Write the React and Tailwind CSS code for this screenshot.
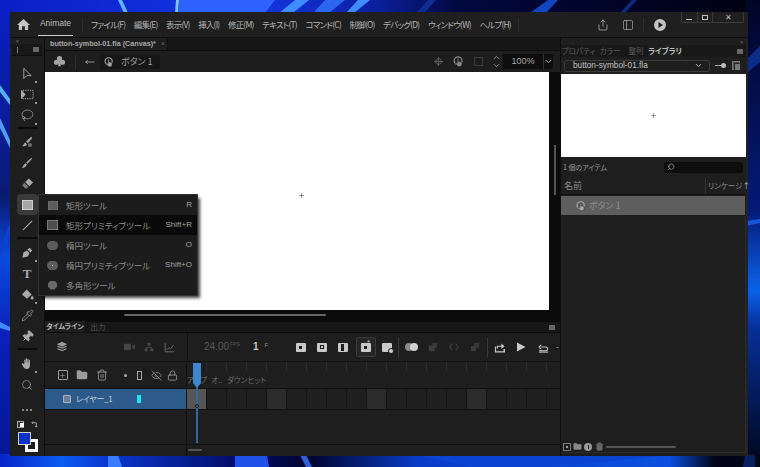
import React from "react";
import { Share, PanelLeft, ChevronDown, ChevronUp, Search, Lasso, Pipette, Pin, MoveLeft, FolderClosed, Trash2, Lock, EyeOff, Plus } from "lucide-react";

const FONT = "font-['Noto_Sans_CJK_JP','Noto_Sans',sans-serif] [font-feature-settings:'palt']";
const LATIN = "font-['Liberation_Sans',sans-serif]";

const menus = ["ファイル(F)", "編集(E)", "表示(V)", "挿入(I)", "修正(M)", "テキスト(T)", "コマンド(C)", "制御(O)", "デバッグ(D)", "ウィンドウ(W)", "ヘルプ(H)"];

// Hand inside a ring, the mark used for button symbols
function ButtonSymbol({ className = "" }) {
  return (
    <svg viewBox="0 0 14 14" className={className}>
      <circle cx="6.500" cy="6" r="5" fill="none" stroke="currentColor" strokeWidth="1.600" />
      <path d="M5.500 3h1.800v4l4 .7V11l-1 2.500H6.500L3 9.500l1-1 1.500 1z" fill="currentColor" stroke="#1d1d1d" strokeWidth=".6" />
    </svg>
  );
}

function Tool({ children, active, corner }) {
  return (
    <div className={`relative h-[21px] w-[21px] flex items-center justify-center text-[#a9a9a9] rounded-sm ${active ? "bg-[#3a3a3a]" : ""}`}>
      {children}
      {corner && <span className="absolute right-[1px] bottom-[1px] w-[2px] h-[2px] bg-[#999]" />}
    </div>
  );
}

function ToolBar() {
  return (
    <div className="w-[35px] shrink-0 flex flex-col items-center border-r border-[#0e0e0e] bg-[#1e1e1e] relative">
      <div className="w-full h-[6px] flex items-center pl-[6px] text-[6px] leading-none text-[#888]">«</div>
      <div className="w-[30px] h-[12px] bg-[#171717] flex items-center justify-between pl-[5px] pr-[3px] border-b border-[#0d0d0d]">
        <span className="w-[1px] h-[6px] bg-[#6d7f8c]" />
        <span className="w-[6px] h-[5px] bg-[#666]" />
      </div>
      <div className="h-[7px]" />
      <Tool corner>
        <svg viewBox="0 0 14 14" className="w-[13px] h-[13px]" fill="none" stroke="currentColor" strokeWidth="1"><path d="M3 1.500v11l3-3.200h5z" /></svg>
      </Tool>
      <Tool corner>
        <svg viewBox="0 0 16 14" className="w-[15px] h-[13px]" fill="none" stroke="currentColor" strokeWidth="1"><path d="M3 2.500h11v9H3z" strokeDasharray="1.500 1" /><path d="M1 2l5 5-5 5z" fill="currentColor" stroke="none" /></svg>
      </Tool>
      <Tool corner><Lasso size={13} strokeWidth={1.3} /></Tool>
      <div className="w-[20px] h-[2px] bg-[#0b0b0b] mt-[1px] mb-[2px]" />
      <Tool>
        <svg viewBox="0 0 14 14" className="w-[12px] h-[12px]" fill="currentColor"><path d="M12 1L6 6.500l2 2L13 2.500z" /><path d="M5 7.500l2 2c-1 2-3 2.500-6 2.500 2-1 2-3.500 4-4.500z" /><circle cx="10.500" cy="10.500" r="2.300" fillOpacity=".6" /></svg>
      </Tool>
      <Tool>
        <svg viewBox="0 0 14 14" className="w-[12px] h-[12px]" fill="currentColor"><path d="M12.500 1L6 6.500 7.500 8 13 2z" /><path d="M5.300 7.300l1.500 1.500C6 11.500 4 12.500 1 13c1.500-1.500 2-4.500 4.300-5.700z" /></svg>
      </Tool>
      <Tool>
        <svg viewBox="0 0 14 14" className="w-[13px] h-[13px]" fill="currentColor"><path d="M8.500 1.500L13 6l-4 4-4.500-4.500z" /><path d="M3.800 6.300l4.200 4.200-1.800 1.800H4.800L1.500 9.200v-.6z" fillOpacity=".65" /></svg>
      </Tool>
      <Tool active>
        <span className="w-[11px] h-[10px] bg-[#a8a8a8] border border-[#cfcfcf]" />
      </Tool>
      <Tool>
        <svg viewBox="0 0 14 14" className="w-[13px] h-[13px]" stroke="currentColor" strokeWidth="1.100"><path d="M2 12L12 2" /></svg>
      </Tool>
      <div className="w-[20px] h-[2px] bg-[#0b0b0b] mt-[1px] mb-[3px]" />
      <Tool corner>
        <svg viewBox="0 0 14 14" className="w-[12px] h-[12px]" fill="currentColor"><path d="M1.500 12.500L3 6l4-2 3 3-2 4z" /><path d="M7.500 3L10 .8l3.200 3.200L11 6.500z" /></svg>
      </Tool>
      <Tool>
        <span className="text-[13px] leading-none font-bold font-['Liberation_Serif',serif] text-[#a9a9a9]">T</span>
      </Tool>
      <Tool corner>
        <svg viewBox="0 0 14 14" className="w-[13px] h-[13px]" fill="currentColor"><path d="M6 1.500l5.500 5.500-5 4.500L1 7z" /><path d="M12 8c1 1.500 1.500 2.300 1.500 3a1.500 1.500 0 0 1-3 0c0-.7.500-1.500 1.500-3z" /></svg>
      </Tool>
      <Tool><Pipette size={13} strokeWidth={1.3} /></Tool>
      <Tool><Pin size={13} strokeWidth={1.6} fill="currentColor" className="rotate-45" /></Tool>
      <div className="w-[20px] h-[2px] bg-[#0b0b0b] mt-[1px] mb-[3px]" />
      <Tool corner>
        <svg viewBox="0 0 14 14" className="w-[13px] h-[13px]" fill="currentColor"><path d="M3.500 7.500V3.300c0-.8 1.200-.8 1.200 0V6h.4V2c0-.9 1.300-.9 1.300 0v4h.4V2.500c0-.9 1.300-.9 1.300 0V6h.4V3.500c0-.8 1.200-.8 1.200 0V9c0 2.500-1.500 4-3.500 4-2.300 0-3-1.200-4.300-3.300L1 7.700c-.4-.8.500-1.400 1.100-.8z" /></svg>
      </Tool>
      <Tool><Search size={12} strokeWidth={1.3} /></Tool>
      <div className="h-[4px]" />
      <Tool>
        <span className="flex gap-[2px]"><span className="w-[2px] h-[2px] bg-[#aaa] rounded-full" /><span className="w-[2px] h-[2px] bg-[#aaa] rounded-full" /><span className="w-[2px] h-[2px] bg-[#aaa] rounded-full" /></span>
      </Tool>
      <div className="w-[21px] flex justify-between items-center h-[10px] mt-[-1px]">
        <span className="relative w-[7px] h-[7px] border border-[#aaa] bg-[#333]"><span className="absolute left-[2px] top-[1px] w-[4px] h-[4px] bg-white" /></span>
        <svg viewBox="0 0 8 8" className="w-[7px] h-[7px]" fill="none" stroke="#aaa" strokeWidth="1"><path d="M1 2h5v5M4.500 5.500L6 7l1.500-1.500M2.500.5L1 2l1.500 1.500" /></svg>
      </div>
      <div className="relative w-[21px] h-[21px] mt-[2px]">
        <span className="absolute right-0 bottom-0 w-[13px] h-[13px] border-[3px] border-white bg-[#1e1e1e]" />
        <span className="absolute left-[1px] top-[1px] w-[13px] h-[13px] bg-[#0b33c9] border border-[#cfcfcf]" />
      </div>
    </div>
  );
}

function EditBar() {
  return (
    <div className="h-[21px] bg-[#1d1d1d] flex items-center">
      <svg viewBox="0 0 14 14" className="w-[13px] h-[13px] ml-[8px] text-[#a5a5a5]" fill="currentColor"><circle cx="7" cy="4" r="2.800" /><circle cx="3.800" cy="7.800" r="2.800" /><circle cx="10.200" cy="7.800" r="2.800" /><path d="M6.300 7h1.400l.8 5H5.500z" /></svg>
      <span className="w-[1px] h-[14px] bg-[#2e2e2e] ml-[9px]" />
      <MoveLeft size={10} className="ml-[9px] text-[#a8a8a8]" strokeWidth={2} />
      <div className="ml-[5px] w-[60px] h-[14px] bg-[#161616] flex items-center pl-[4px] text-[#a0a0a0]">
        <ButtonSymbol className="w-[10px] h-[10px] shrink-0" />
        <span className="ml-[7px] text-[9px] leading-none whitespace-nowrap">ボタン 1</span>
      </div>
      <div className="ml-auto flex items-center text-[#6a6a6a] mr-[7px]">
        <svg viewBox="0 0 12 12" className="w-[9px] h-[9px] mr-[10px]" fill="none" stroke="currentColor" strokeWidth="1"><circle cx="6" cy="6" r="3.800" /><path d="M6 0v12M0 6h12" /></svg>
        <ButtonSymbol className="w-[11px] h-[11px] mr-[10px] text-[#8a8a8a]" />
        <span className="w-[9px] h-[9px] border border-[#3a3a3a] mr-[9px]" />
        <div className="flex flex-col text-[#a0a0a0] mr-[2px]">
          <ChevronUp size={9} strokeWidth={2} className="-mb-[1px]" />
          <ChevronDown size={9} strokeWidth={2} />
        </div>
        <div className={`w-[40px] h-[15px] bg-[#0e0e0e] text-[9px] leading-[15px] text-center text-[#a8a8a8] ${LATIN}`}>100%</div>
        <div className="w-[10px] h-[15px] bg-[#0e0e0e] border-l border-[#333] rounded-r-[2px] flex items-center justify-center text-[#bbb]">
          <ChevronDown size={9} strokeWidth={2.5} />
        </div>
      </div>
    </div>
  );
}

function SquareIcon({ dim, variant = "dot" }) {
  return (
    <span className={`relative w-[10px] h-[9px] bg-[#c8c8c8] rounded-[1px] flex items-center justify-center ${dim ? "opacity-30" : ""}`}>
      {variant === "dot" && <span className="w-[3px] h-[3px] bg-[#1d1d1d]" />}
      {variant === "ring" && <span className="w-[4px] h-[4px] border border-[#1d1d1d]" />}
      {variant === "half" && <span className="w-[3px] h-[7px] bg-[#1d1d1d]" />}
    </span>
  );
}

function Slot({ w = 21, children, className = "" }) {
  return <div className={`flex items-center justify-center shrink-0 ${className}`} style={{ width: w }}>{children}</div>;
}

function TimelineToolbar() {
  return (
    <div className="h-[29px] flex items-center border-b border-[#121212] bg-[#1e1e1e]">
      <Slot w={34}>
        <svg viewBox="0 0 14 14" className="w-[12px] h-[12px] text-[#9a9a9a]" fill="currentColor"><path d="M7 1l6 2.800-6 2.800-6-2.800z" /><path d="M1 6.300l1.500-.7L7 7.700l4.500-2.100 1.500.7-6 2.800z" /><path d="M1 9.200l1.500-.7L7 10.600l4.500-2.100 1.500.7L7 12z" /></svg>
      </Slot>
      <Slot w={40} />
      <Slot w={20}>
        <svg viewBox="0 0 14 10" className="w-[11px] h-[8px] text-[#444]" fill="currentColor"><rect y="1" width="9" height="8" rx="1" /><path d="M10 4l4-2.500v7L10 6z" /></svg>
      </Slot>
      <Slot w={20}>
        <svg viewBox="0 0 14 14" className="w-[10px] h-[10px] text-[#4a4a4a]" fill="currentColor"><rect x="5" y="1" width="4" height="4" /><rect x="1" y="9" width="4" height="4" /><rect x="9" y="9" width="4" height="4" /><path d="M6.500 5h1v2H11v2h-1V8H4v1H3V7h3.500z" /></svg>
      </Slot>
      <Slot w={20}>
        <svg viewBox="0 0 14 14" className="w-[11px] h-[11px] text-[#6d6d6d]" fill="none" stroke="currentColor" strokeWidth="1.200"><path d="M1.500 1v11.500H13" /><path d="M3.500 10l3-3 2 1.500L12 4" /></svg>
      </Slot>
      <div className="w-[1px] h-full bg-[#111] ml-[8px] shrink-0" />
      <div className={`ml-[16px] w-[36px] flex items-start text-[#575757] leading-none whitespace-nowrap ${LATIN}`}>
        <span className="text-[10px]">24.00</span>
        <span className="text-[5px] ml-[1px]">FPS</span>
      </div>
      <div className={`w-[32px] flex items-start leading-none ${LATIN}`}>
        <span className="ml-[13px] text-[10px] font-bold text-[#c4c4c4]">1</span>
        <span className="ml-[6px] text-[6px] text-[#888]">F</span>
      </div>
      <Slot w={21} className="ml-[18px]"><SquareIcon /></Slot>
      <Slot w={21}><SquareIcon variant="ring" /></Slot>
      <Slot w={21}><SquareIcon variant="half" /></Slot>
      <Slot w={21} className="ml-[2px]">
        <span className="relative w-[20px] h-[20px] border border-[#3b3b3b] bg-[#262626] rounded-[2px] flex items-center justify-center">
          <SquareIcon />
          <span className="absolute top-[2px] right-[3px] text-[#ccc] text-[6px] leading-none">↑</span>
        </span>
      </Slot>
      <Slot w={21}>
        <span className="relative flex"><SquareIcon variant="none" /><span className="absolute -right-[2px] -bottom-[2px] w-[6px] h-[6px] rounded-full bg-[#cfcfcf] border border-[#1e1e1e]" /></span>
      </Slot>
      <span className="w-[1px] h-[19px] bg-[#3a3a3a] ml-[1px] shrink-0" />
      <Slot w={22} className="ml-[1px]">
        <span className="flex"><span className="w-[8px] h-[8px] rounded-full bg-[#8a8a8a]" /><span className="w-[8px] h-[8px] rounded-full bg-[#d0d0d0] -ml-[3px]" /></span>
      </Slot>
      <Slot w={21}><svg viewBox="0 0 12 12" className="w-[10px] h-[10px] text-[#3e3e3e]" fill="currentColor"><rect x="1" y="4" width="7" height="7" /><rect x="5" y="1" width="6" height="6" fillOpacity=".8" /></svg></Slot>
      <Slot w={21}><svg viewBox="0 0 12 12" className="w-[10px] h-[10px] text-[#3e3e3e]" fill="none" stroke="currentColor" strokeWidth="1.500"><path d="M4 2L1 6l3 4M8 2l3 4-3 4" /></svg></Slot>
      <Slot w={21}><svg viewBox="0 0 12 12" className="w-[10px] h-[10px] text-[#3e3e3e]" fill="currentColor"><rect x="1" y="5" width="6" height="6" /><rect x="5" y="1" width="6" height="6" fillOpacity=".8" /></svg></Slot>
      <span className="w-[1px] h-[19px] bg-[#3a3a3a] ml-[2px] shrink-0" />
      <Slot w={22}>
        <svg viewBox="0 0 12 12" className="w-[11px] h-[11px] text-[#c8c8c8]" fill="currentColor"><path d="M1 5h1.300v5h8V7.500H12V11.500H1z" /><path d="M3 7V4h5V1.500L11.500 4.500 8 7.500V5.300H4.300V7z" /></svg>
      </Slot>
      <Slot w={22}>
        <svg viewBox="0 0 10 10" className="w-[10px] h-[10px] text-[#c8c8c8]" fill="currentColor"><path d="M1 .5L9.500 5 1 9.500z" /></svg>
      </Slot>
      <Slot w={22}>
        <svg viewBox="0 0 12 12" className="w-[11px] h-[11px] text-[#c8c8c8]" fill="none" stroke="currentColor" strokeWidth="1.200"><path d="M3.500 5.500h5a2 2 0 0 1 0 4H1M3.500 3L1.200 5.500 3.500 8" /><path d="M1 11h10" /></svg>
      </Slot>
      <span className="ml-[2px] text-[8px] text-[#bbb] leading-none">-</span>
    </div>
  );
}

const frameLabels = ["アップ", "オ..", "ダウン", "ヒット"];

function Timeline() {
  const cells = Array.from({ length: 18 }, (_, i) => i);
  return (
    <div className="flex-1 flex flex-col bg-[#1e1e1e] min-h-0">
      <div className="h-[11px] flex items-end bg-[#171717] border-b border-[#0e0e0e]">
        <div className="h-[11px] w-[41px] bg-[#1e1e1e] text-[7px] leading-[11px] text-center font-bold text-[#b9b9b9] border-r border-[#0e0e0e] whitespace-nowrap">タイムライン</div>
        <div className="h-[11px] w-[24px] text-[7.5px] leading-[11px] text-center text-[#555] whitespace-nowrap">出力</div>
        <span className="ml-auto mr-[5px] mb-[2px] w-[6px] h-[5px] bg-[#666]" />
      </div>
      <TimelineToolbar />
      <div className="flex-1 flex flex-col relative">
        {/* layer controls + frame ruler */}
        <div className="h-[27px] flex border-b border-[#111]">
          <div className="w-[142px] shrink-0 flex items-center border-r border-[#111] text-[#9c9c9c]">
            <Slot w={17} className="ml-[9px]"><span className="w-[10px] h-[10px] border border-[#9c9c9c] rounded-[1px] flex items-center justify-center"><Plus size={7} strokeWidth={2} /></span></Slot>
            <Slot w={20} className="ml-[1px]"><FolderClosed size={12} fill="currentColor" strokeWidth={1} /></Slot>
            <Slot w={20}><Trash2 size={12} strokeWidth={1.6} /></Slot>
            <Slot w={10} className="ml-[8px]"><span className="w-[3px] h-[3px] rounded-full bg-[#aaa]" /></Slot>
            <Slot w={14} className="ml-[2px]"><span className="w-[5px] h-[9px] border border-[#aaa]" /></Slot>
            <Slot w={16} className="ml-[2px]"><EyeOff size={11} strokeWidth={1.5} /></Slot>
            <Slot w={16}><Lock size={11} strokeWidth={1.8} /></Slot>
          </div>
          <div className="flex-1 relative overflow-hidden">
            <div className="flex h-[9px]">
              {cells.map((i) => <span key={i} className="w-[20px] h-full border-r border-[#2c2c2c] shrink-0" />)}
            </div>
            <div className="flex mt-[3px] text-[7.5px] leading-[12px] text-[#6d6d6d]">
              {frameLabels.map((t) => <span key={t} className="w-[20px] text-center whitespace-nowrap shrink-0">{t}</span>)}
            </div>
          </div>
        </div>
        {/* layer row */}
        <div className="h-[21px] flex border-b border-[#111]">
          <div className="w-[142px] shrink-0 bg-[#2c5a8a] flex items-center border-r border-[#111]">
            <span className="ml-[18px] w-[8px] h-[8px] border border-[#a9b7c4] bg-[#6d8094] rounded-[1px] shrink-0" />
            <span className="ml-[5px] text-[8px] tracking-[-0.3px] leading-none text-[#c4d0dc] whitespace-nowrap">レイヤー_1</span>
            <span className="ml-auto mr-[45px] w-[4px] h-[8px] bg-[#19e7f2]" />
          </div>
          <div className="flex">
            {cells.map((i) => (
              <span key={i} className={`w-[20px] h-full border-r border-[#141414] shrink-0 ${i === 0 ? "bg-[#555]" : i % 5 === 4 ? "bg-[#2b2b2b]" : "bg-[#1f1f1f]"}`} />
            ))}
          </div>
        </div>
        <div className="flex-1 flex min-h-0">
          <div className="w-[142px] shrink-0 border-r border-[#111]" />
        </div>
        {/* bottom scroll */}
        <div className="h-[12px] flex border-t border-[#111]">
          <div className="w-[142px] shrink-0 border-r border-[#111]" />
          <span className="w-[14px] h-[2px] bg-[#555] mt-[4px] rounded-full ml-[1px]" />
        </div>
        {/* playhead */}
        <div className="absolute left-[148px] top-[1px] w-[8px] h-[25px] bg-[#3f86cf] [clip-path:polygon(0_0,100%_0,100%_80%,50%_100%,0_80%)]" />
        <div className="absolute left-[151px] top-[25px] w-[2px] h-[56px] bg-[#2f689f]" />
        <div className="absolute left-[150px] top-[42px] w-[4px] h-[4px] rounded-full border border-[#222]" />
      </div>
    </div>
  );
}

function LibraryPanel() {
  return (
    <div className="w-[186px] shrink-0 flex flex-col bg-[#1e1e1e] border-l border-[#0e0e0e] pb-[3px]">
      <div className="h-[7px] flex justify-end items-center pr-[3px] text-[6px] leading-none text-[#777]">»</div>
      <div className="h-[12px] flex items-stretch bg-[#181818] text-[7.5px] leading-[12px] text-[#5e5e5e]">
        <span className="w-[35px] text-center whitespace-nowrap">プロパティ</span>
        <span className="w-[28px] text-center whitespace-nowrap">カラー</span>
        <span className="w-[24px] text-center whitespace-nowrap">整列</span>
        <span className="w-[34px] text-center font-bold text-[#bdbdbd] bg-[#1e1e1e] whitespace-nowrap">ライブラリ</span>
        <span className="ml-auto mr-[3px] self-center w-[6px] h-[5px] bg-[#666]" />
      </div>
      <div className="h-[17px] flex items-center">
        <div className="ml-[3px] w-[146px] h-[12px] border border-[#3c3c3c] rounded-[3px] flex items-center justify-between pl-[8px] pr-[6px] leading-none text-[#c2c2c2]">
          <span className={`text-[8.25px] mt-[2px] ${LATIN}`}>button-symbol-01.fla</span>
          <ChevronDown size={9} strokeWidth={2.5} />
        </div>
        <span className="ml-[5px] flex items-center"><span className="w-[6px] h-[1px] bg-[#aaa]" /><span className="w-[5px] h-[5px] rounded-full bg-[#bbb]" /></span>
        <span className="relative ml-[6px] w-[8px] h-[9px] border border-[#777] bg-[#555]"><span className="absolute left-[1px] top-[1px] w-[7px] h-[8px] bg-[#777] border border-[#222]" /></span>
      </div>
      <div className="h-[83px] bg-white flex items-center justify-center text-[#222]">
        <Plus size={7} strokeWidth={1.5} />
      </div>
      <div className="h-[20px] flex items-center justify-between pl-[2px] pr-[3px]">
        <span className="text-[7px] leading-none text-[#9a9a9a]">1 個のアイテム</span>
        <div className="w-[79px] h-[11px] bg-[#0d0d0d] rounded-[2px] flex items-center pl-[3px] text-[#aaa]">
          <Search size={8} strokeWidth={2} className="-scale-x-100" />
        </div>
      </div>
      <div className="h-[18px] flex items-center border-b border-[#111] text-[9px] leading-none text-[#8c8c8c]">
        <span className="ml-[3px]">名前</span>
        <span className="ml-auto h-[16px] w-[41px] border-l border-[#333] pl-[2px] text-[7.5px] leading-[16px] whitespace-nowrap">リンケージ<span className="text-[#bbb]">↑</span></span>
      </div>
      <div className="mr-[1px] mt-[1px] h-[19px] bg-[#5e5e5e] flex items-center text-[#8f8f8f]">
        <ButtonSymbol className="ml-[15px] w-[10px] h-[10px] text-[#aaa] shrink-0" />
        <span className="ml-[3px] text-[9px] leading-none">ボタン 1</span>
      </div>
      <div className="flex-1 border-b border-r border-[#2a2a2a] flex flex-col justify-end">
        <div className="h-[11px] flex items-center pl-[2px] text-[#8a8a8a]">
          <span className="w-[8px] h-[8px] border border-[#777] flex items-center justify-center"><span className="w-[2px] h-[2px] bg-[#999]" /></span>
          <FolderClosed size={9} fill="currentColor" strokeWidth={1} className="ml-[2px]" />
          <span className="ml-[2px] w-[8px] h-[8px] rounded-full bg-[#999] flex items-center justify-center"><span className="w-[1px] h-[4px] bg-[#222]" /></span>
          <Trash2 size={9} className="ml-[3px] text-[#666]" fill="currentColor" />
          <span className="ml-[2px] w-[70px] h-[2px] rounded-full bg-[#555]" />
        </div>
      </div>
    </div>
  );
}

const shapeItems = [
  { label: "矩形ツール", key: "R", icon: <span className="w-[10px] h-[9px] bg-[#5c5c5c] border border-[#6a6a6a]" /> },
  { label: "矩形プリミティブツール", key: "Shift+R", active: true, icon: <span className="w-[9px] h-[8px] bg-[#4f4f4f] outline outline-[1px] outline-[#777]" /> },
  { label: "楕円ツール", key: "O", icon: <span className="w-[11px] h-[9px] rounded-full bg-[#5c5c5c]" /> },
  { label: "楕円プリミティブツール", key: "Shift+O", icon: <span className="w-[11px] h-[9px] rounded-full bg-[#5c5c5c] flex items-center justify-center"><span className="w-[1px] h-[1px] bg-[#ccc]" /></span> },
  { label: "多角形ツール", icon: <span className="w-[9px] h-[9px] bg-[#6a6a6a] [clip-path:polygon(30%_0,70%_0,100%_30%,100%_70%,70%_100%,30%_100%,0_70%,0_30%)]" /> },
];

function ShapeMenu() {
  return (
    <div className="absolute left-[29px] top-[183px] w-[158px] bg-[#1c1c1c] shadow-[0_0_0_1px_#333,3px_3px_3px_rgba(0,0,0,0.75)] z-10">
      {shapeItems.map((item) => (
        <div key={item.label} className={`h-[20px] flex items-center text-[8.5px] leading-none text-[#8c8c8c] ${item.active ? "bg-[#0a0a0a]" : ""}`}>
          <span className="ml-[7px] w-[13px] flex items-center justify-center">{item.icon}</span>
          <span className="ml-[7px] whitespace-nowrap">{item.label}</span>
          {item.key && <span className={`ml-auto mr-[5px] text-[8px] text-[#a2a2a2] whitespace-nowrap ${LATIN}`}>{item.key}</span>}
        </div>
      ))}
    </div>
  );
}

function Wallpaper() {
  return (
    <svg viewBox="0 0 760 467" className="absolute inset-0 w-[760px] h-[467px]">
      <defs>
        <linearGradient id="bgTop" x1="0" x2="1" y1="0" y2="0">
          <stop offset="0" stopColor="#0a1fc4" />
          <stop offset="0.33" stopColor="#1436e6" />
          <stop offset="0.5" stopColor="#0a1f9c" />
          <stop offset="0.6" stopColor="#020840" />
          <stop offset="1" stopColor="#000010" />
        </linearGradient>
        <linearGradient id="rightGlow" x1="0" x2="0" y1="0" y2="1">
          <stop offset="0" stopColor="#010528" />
          <stop offset="0.45" stopColor="#041a78" />
          <stop offset="0.62" stopColor="#0a62e8" />
          <stop offset="0.7" stopColor="#06309a" />
          <stop offset="1" stopColor="#000518" />
        </linearGradient>
        <linearGradient id="bottomGlow" x1="0" x2="1" y1="0" y2="0">
          <stop offset="0" stopColor="#0724c8" />
          <stop offset="0.08" stopColor="#0c5cf0" />
          <stop offset="0.14" stopColor="#0a38d0" />
          <stop offset="0.3" stopColor="#041070" />
          <stop offset="0.41" stopColor="#000530" />
          <stop offset="0.55" stopColor="#0a3cc8" />
          <stop offset="0.88" stopColor="#0a50e0" />
          <stop offset="0.94" stopColor="#000418" />
          <stop offset="1" stopColor="#000418" />
        </linearGradient>
        <linearGradient id="leftBg" x1="0" x2="0" y1="0" y2="1">
          <stop offset="0" stopColor="#0a20c8" />
          <stop offset="0.3" stopColor="#0a1c90" />
          <stop offset="0.42" stopColor="#0a1a70" />
          <stop offset="0.55" stopColor="#0a4adf" />
          <stop offset="0.72" stopColor="#0a20b8" />
          <stop offset="1" stopColor="#061694" />
        </linearGradient>
      </defs>
      <rect width="760" height="467" fill="url(#bgTop)" />
      <rect x="0" y="0" width="12" height="467" fill="url(#leftBg)" />
      <rect x="746" y="0" width="14" height="467" fill="url(#rightGlow)" />
      <rect x="0" y="454" width="760" height="13" fill="url(#bottomGlow)" />
      {/* top streaks */}
      <path d="M118 0h4l6 13h-4z" fill="#5fb4ff" />
      <path d="M176 0h3l-1 13h-3z" fill="#7cc4ff" />
      <path d="M179 0h96l-10 13h-87z" fill="#2f63ff" />
      <path d="M295 0h14l-16 13h-14z" fill="#3f8cff" />
      <path d="M325 0h20l-16 13h-16z" fill="#2a66f0" />
      <path d="M358 0h12l-16 13h-8z" fill="#3f8cff" />
      <path d="M428 0h8l-12 13h-8z" fill="#0f2c90" />
      <path d="M548 0h10l-12 13h-16z" fill="#1146c0" />
      <path d="M632 0h5l-12 13h-5z" fill="#0a2c80" />
      {/* left strip streaks */}
      <path d="M0 85l10 14v6L0 92z" fill="#5ab0f5" />
      <path d="M0 118l10 22v8L0 128z" fill="#4f9cf0" />
      <path d="M0 250l10-28v14L0 256z" fill="#0e40d0" />
      <path d="M0 322l10 5v4l-10-3z" fill="#3f8cff" />
      {/* bottom bands */}
      <path d="M108 455h10l4 12h-14z" fill="#3a7cff" />
      <path d="M235 455h32l2 12h-34z" fill="#1f50e8" />
      <path d="M300 455h6l6 12h-6z" fill="#2f62d8" />
      <path d="M420 455h250l-120 12H470z" fill="#0b44d0" />
      <path d="M745 455h10v12h-12z" fill="#082060" />
      {/* right strip band */}
      <path d="M746 74l14-12V46l-14 14z" fill="#0c2c8a" />
      <path d="M746 226l14-3v-4l-14 2z" fill="#1454d8" />
    </svg>
  );
}

export default function App() {
  return (
    <div className={`relative w-[760px] h-[467px] overflow-hidden bg-black pt-[12px] pl-[10px] ${FONT}`}>
      <Wallpaper />
      <div className="relative w-[738px] h-[444px] rounded-t-[3px] bg-[#222222] flex flex-col">
        {/* title bar */}
        <div className="h-[26px] shrink-0 flex items-center bg-[#1f1f1f] border-b border-[#101010] relative">
          <svg viewBox="0 0 14 14" className="ml-[7px] w-[13px] h-[13px] text-[#c4c4c4] shrink-0" fill="currentColor"><path d="M7 1L0 7.500h2V13h3.500V9h3v4H12V7.500h2z" /></svg>
          <div className={`ml-[8px] h-[24px] self-start w-[35px] shrink-0 flex items-center justify-center text-[8.5px] leading-none text-[#bdbdbd] border-b border-[#c8c8c8] ${LATIN}`}>Animate</div>
          <span className="ml-[9px] w-[1px] h-[14px] bg-[#2d2d2d] shrink-0" />
          <div className="ml-[8px] flex gap-[8.5px] text-[8.5px] tracking-[-0.8px] leading-none text-[#b2b2b2] whitespace-nowrap">
            {menus.map((m) => <span key={m}>{m}</span>)}
          </div>
          <span className="ml-[7px] w-[1px] h-[14px] bg-[#2d2d2d] shrink-0" />
          <div className="ml-auto flex items-center mr-[82px] text-[#b5b5b5]">
            <Share size={12} strokeWidth={1.5} />
            <PanelLeft size={12} strokeWidth={1.3} className="ml-[13px]" />
            <span className="ml-[9px] w-[1px] h-[14px] bg-[#2d2d2d]" />
            <svg viewBox="0 0 12 12" className="ml-[10px] w-[12px] h-[12px] text-[#c4c4c4]" fill="currentColor"><path fillRule="evenodd" d="M6 0a6 6 0 1 0 0 12A6 6 0 0 0 6 0zM4.500 3l4.500 3-4.500 3z" /></svg>
          </div>
          <div className="absolute right-[4px] top-0 h-[11px] w-[63px] border border-t-0 border-[#3a3a3a] rounded-b-[2px] flex items-center text-[#c0c0c0]">
            <span className="flex-1 flex justify-center items-end h-full pb-[2px] border-r border-[#3a3a3a]"><span className="w-[6px] h-[1px] bg-current" /></span>
            <span className="flex-1 flex justify-center items-center h-full border-r border-[#3a3a3a]"><span className="w-[6px] h-[5px] border border-current" /></span>
            <span className="w-[30px] text-center text-[8px] leading-none">✕</span>
          </div>
        </div>
        {/* body */}
        <div className="flex-1 flex min-h-0">
          <ToolBar />
          <div className="w-[515px] shrink-0 flex flex-col min-h-0">
            {/* doc tab */}
            <div className="h-[13px] flex bg-[#171717] border-b border-[#0e0e0e]">
              <div className={`w-[123px] h-full bg-[#1e1e1e] border-r border-[#101010] flex items-center pl-[5px] text-[7.2px] leading-none font-bold text-[#a9a9a9] whitespace-nowrap ${LATIN}`}>
                button-symbol-01.fla (Canvas)*
                <span className="ml-[5px] font-normal text-[#666]">×</span>
              </div>
            </div>
            <EditBar />
            <div className="h-[238px] flex bg-[#0b0b0b]">
              <div className="w-[504px] bg-white flex items-center justify-center text-[#111] pl-[8px] pt-[8px]">
                <Plus size={7} strokeWidth={1.5} />
              </div>
              <div className="flex-1 flex justify-center pt-[73px]">
                <span className="w-[2px] h-[50px] bg-[#555]" />
              </div>
            </div>
            <div className="h-[12px] bg-[#0b0b0b] pl-[79px] pt-[4px]">
              <span className="block w-[202px] h-[2px] bg-[#666] rounded-full" />
            </div>
            <Timeline />
          </div>
          <LibraryPanel />
        </div>
        <ShapeMenu />
      </div>
    </div>
  );
}
